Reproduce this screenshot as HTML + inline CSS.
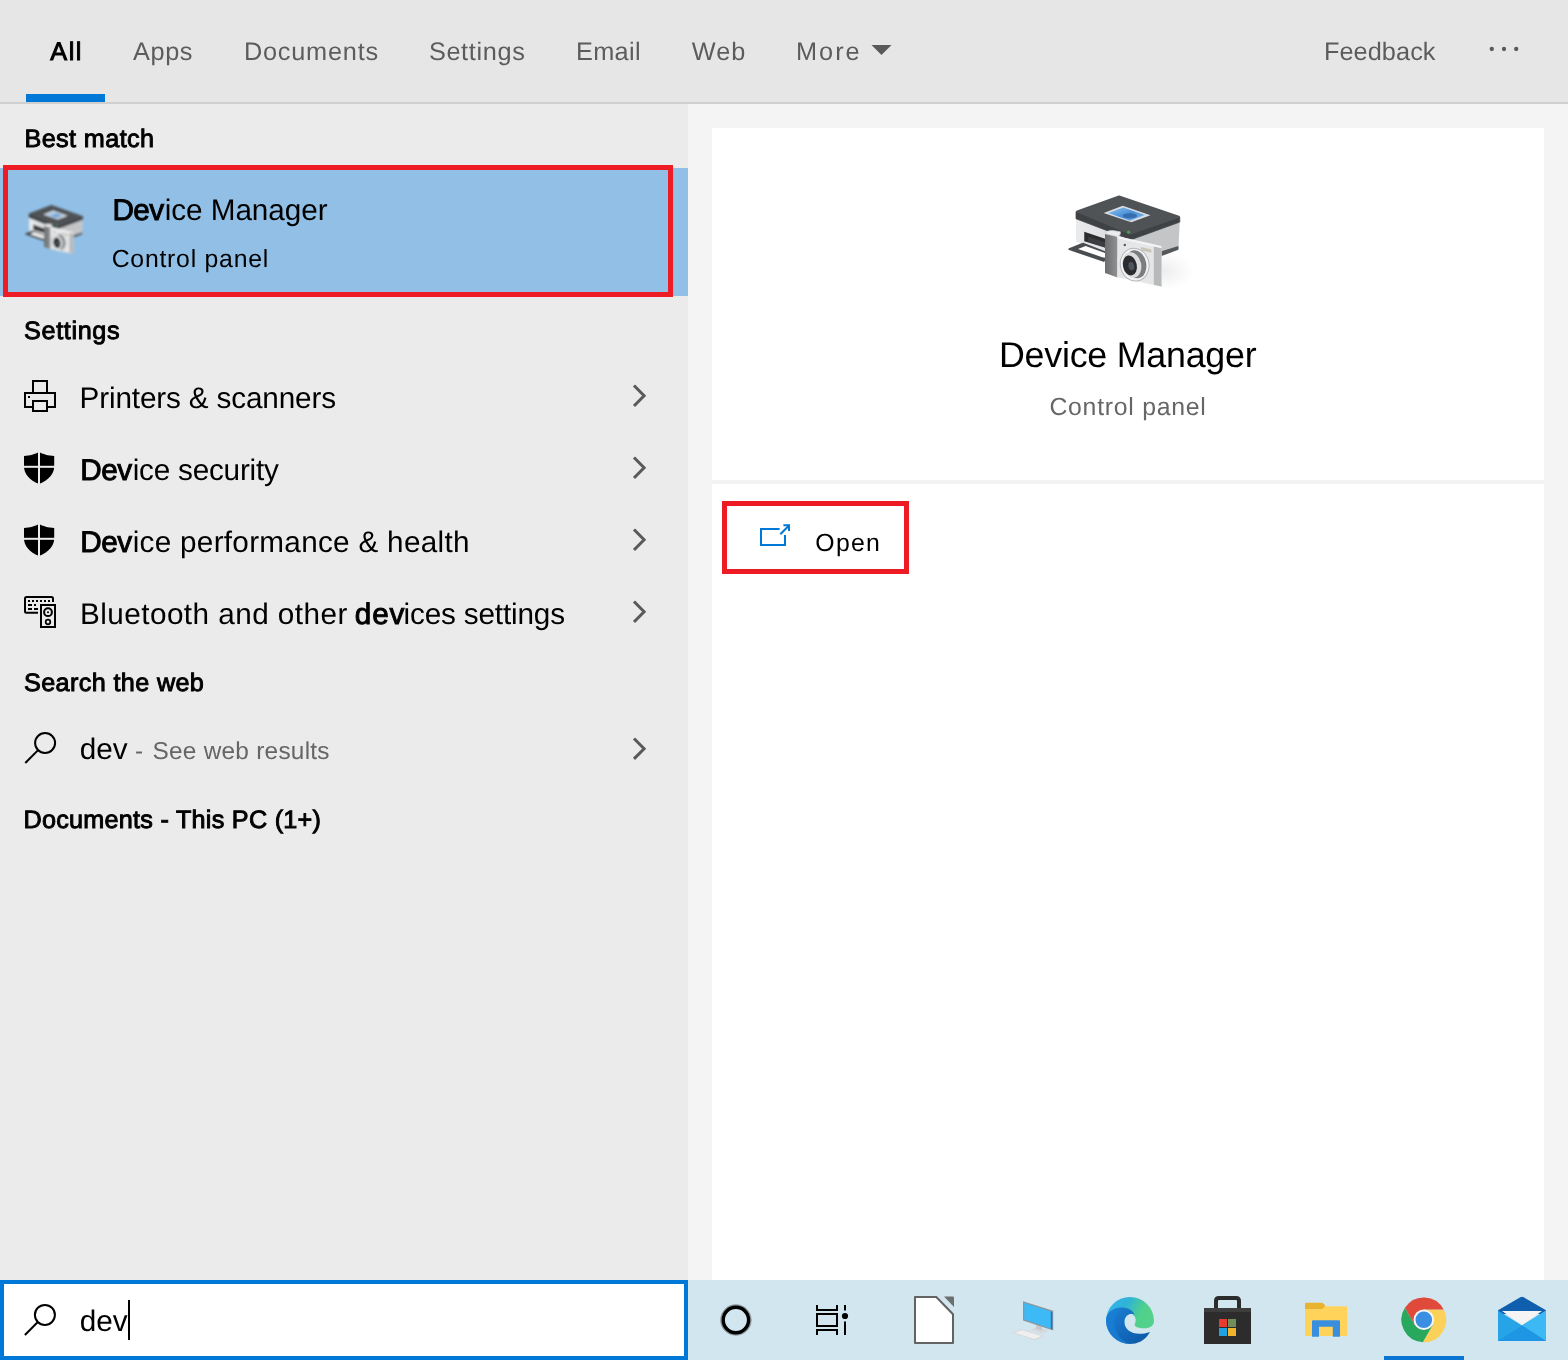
<!DOCTYPE html>
<html lang="en">
<head>
<meta charset="utf-8">
<title>Search - Device Manager</title>
<style>
html,body{margin:0;padding:0;}
body{width:1568px;height:1360px;position:relative;overflow:hidden;background:#ebebeb;font-family:"Liberation Sans",sans-serif;}
.abs{position:absolute;}
.t{position:absolute;white-space:nowrap;line-height:1;margin:0;padding:0;}
.t b{font-weight:400;-webkit-text-stroke:0.95px currentColor;}
.t span,.t b{display:inline;}
#hdr{left:0;top:0;width:1568px;height:102px;background:#e6e6e6;}
#hdrline{left:0;top:102px;width:1568px;height:2px;background:#cfcfcf;}
#tabsel{left:26px;top:94px;width:79px;height:8px;background:#0078d7;}
#leftcol{left:0;top:104px;width:688px;height:1176px;background:#ebebeb;}
#rightcol{left:688px;top:104px;width:880px;height:1176px;background:#f4f4f4;}
#card{left:712px;top:128px;width:832px;height:1152px;background:#fff;}
#cardsep{left:712px;top:480px;width:832px;height:4px;background:#f3f3f3;}
#selrow{left:0;top:168px;width:688px;height:128px;background:#91bfe6;}
#red1{left:3px;top:165px;width:660px;height:122px;border:5px solid #ed1c24;}
#red2{left:722px;top:501px;width:177px;height:63px;border:5px solid #ed1c24;}
#sbox{left:0;top:1280px;width:680px;height:72px;border:4px solid #0078d7;background:#fff;}
#caret{left:128px;top:1300px;width:2px;height:40px;background:#000;}
#tbar{left:688px;top:1280px;width:880px;height:80px;background:#d2e6f0;}
#active{left:1384px;top:1356px;width:80px;height:4px;background:#0a74d2;}
svg{position:absolute;overflow:visible;}
#txt{position:absolute;left:0;top:0;width:1568px;height:1360px;will-change:transform;text-rendering:geometricPrecision;}
</style>
</head>
<body>
<div class="abs" id="hdr"></div>
<div class="abs" id="leftcol"></div>
<div class="abs" id="rightcol"></div>
<div class="abs" id="hdrline"></div>
<div class="abs" id="tabsel"></div>
<div class="abs" id="card"></div>
<div class="abs" id="cardsep"></div>
<div class="abs" id="selrow"></div>
<div class="abs" id="red1"></div>
<div class="abs" id="red2"></div>
<div class="abs" id="sbox"></div>
<div class="abs" id="caret"></div>
<div class="abs" id="tbar"></div>
<div class="abs" id="active"></div>
<svg width="1568" height="1360" viewBox="0 0 1568 1360" style="left:0;top:0">
<polygon points="871.5,45 891.5,45 881.5,55" fill="#595959"/>
<circle cx="1491.8" cy="49" r="2.15" fill="#595959"/>
<circle cx="1504" cy="49" r="2.15" fill="#595959"/>
<circle cx="1516.2" cy="49" r="2.15" fill="#595959"/>
<polyline points="634,385.55 644.1,395.75 634,405.95" fill="none" stroke="#595959" stroke-width="3"/>
<polyline points="634,457.55 644.1,467.75 634,477.95" fill="none" stroke="#595959" stroke-width="3"/>
<polyline points="634,529.55 644.1,539.75 634,549.95" fill="none" stroke="#595959" stroke-width="3"/>
<polyline points="634,601.55 644.1,611.75 634,621.95" fill="none" stroke="#595959" stroke-width="3"/>
<polyline points="634,738.50 644.1,748.70 634,758.90" fill="none" stroke="#595959" stroke-width="3"/>
<g fill="none" stroke="#000" stroke-width="2"><path d="M33,393V381H47V393"/><rect x="25" y="393" width="30" height="14"/><rect x="33" y="401" width="14" height="10" fill="#ebebeb"/></g><rect x="28" y="396" width="2" height="2" fill="#000"/>
<path d="M39,451.8C35.5,454.3 29.5,455.8 24,456V466.5C24,474 29.5,480 39,484C48.5,480 54.2,474 54.2,466.5V456C48.7,455.8 42.5,454.3 39,451.8Z" fill="#000"/><rect x="38" y="450" width="2" height="36" fill="#ebebeb"/><rect x="22" y="465.8" width="34" height="2" fill="#ebebeb"/>
<path d="M39,523.8C35.5,526.3 29.5,527.8 24,528V538.5C24,546 29.5,552 39,556C48.5,552 54.2,546 54.2,538.5V528C48.7,527.8 42.5,526.3 39,523.8Z" fill="#000"/><rect x="38" y="522" width="2" height="36" fill="#ebebeb"/><rect x="22" y="537.8" width="34" height="2" fill="#ebebeb"/>
<g fill="none" stroke="#000" stroke-width="2"><path d="M53,602V598.5Q53,597 51.5,597H26.5Q25,597 25,598.5V611.3Q25,612.8 26.5,612.8H38"/><rect x="41" y="605" width="14" height="22"/><circle cx="48" cy="612.2" r="3.9"/><circle cx="48" cy="622" r="2.3" stroke-width="1.7"/></g><g fill="#000"><rect x="28" y="600" width="2" height="2"/><rect x="32" y="600" width="2" height="2"/><rect x="36" y="600" width="2" height="2"/><rect x="40" y="600" width="2" height="2"/><rect x="44" y="600" width="2" height="2"/><rect x="48" y="600" width="2" height="2"/><rect x="28" y="604" width="4" height="2"/><rect x="34" y="604" width="2" height="2"/><rect x="28" y="608" width="4" height="2"/><rect x="34" y="608" width="4" height="2"/><circle cx="48" cy="612.2" r="1"/></g>
<g fill="none" stroke="#000" stroke-width="2"><circle cx="45.1" cy="743" r="10"/><path d="M38.06,750.11L25.3,763"/></g>
<g fill="none" stroke="#000" stroke-width="2"><circle cx="44.9" cy="1314.9" r="10"/><path d="M37.85,1321.99L24.9,1335"/></g>
<g fill="none" stroke="#0078d7" stroke-width="2"><path d="M779.6,529H761V545H785V535"/><path d="M780.3,534.2L788.8,525.7"/><path d="M783.4,525.3H789V531"/></g>
<circle cx="735.9" cy="1320" r="14.9" fill="none" stroke="#7d8488" stroke-width="1.6" opacity=".8"/><circle cx="735.9" cy="1320" r="12.7" fill="none" stroke="#000" stroke-width="3.4"/>
<g fill="none" stroke="#000" stroke-width="2"><rect x="817" y="1314" width="20" height="12"/><path d="M817,1305V1310H837V1305"/><path d="M817,1335V1330H837V1335"/><path d="M845,1305V1310.4M845,1321.5V1335"/></g><circle cx="845" cy="1316" r="3.1" fill="#000"/>
<path d="M915,1297H936.3L953,1314.3V1343H915Z" fill="#fff" stroke="#636363" stroke-width="2" stroke-linejoin="round"/><path d="M944,1296.6H953Q954,1296.6 954,1297.6V1307Z" fill="#6c6e70"/>
<polygon points="1011.5,1332.8 1022,1329 1045,1336 1035,1340.6" fill="#d6dadd"/><polygon points="1014.5,1332.9 1022,1330.2 1041.5,1336 1034.5,1339" fill="#efefef"/><polygon points="1030.5,1329.5 1038,1326.5 1049,1331 1041,1333.5" fill="#d5d9dc"/><polygon points="1036,1324 1042,1326 1042,1330.5 1036,1329" fill="#c5c9cc"/><polygon points="1023,1301.2 1053.2,1310.8 1053.2,1330.5 1023,1320.6" fill="#8e9499"/><polygon points="1024.2,1302.8 1052,1311.8 1052,1329 1024.2,1319.6" fill="#3db9f5"/><polygon points="1050.8,1311.4 1052.3,1311.9 1052.3,1329.2 1050.8,1328.7" fill="#1576d1"/>
<defs><linearGradient id="eg1" x1="0" y1="0" x2="1" y2="0.35"><stop offset="0" stop-color="#35b4f2"/><stop offset=".45" stop-color="#2fb3d8"/><stop offset=".8" stop-color="#4fd08c"/><stop offset="1" stop-color="#52d28a"/></linearGradient><linearGradient id="eg2" x1="0" y1="0" x2="1" y2="1"><stop offset="0" stop-color="#1b82d8"/><stop offset="1" stop-color="#0c55a3"/></linearGradient></defs>
<path d="M1106,1321A24,24 0 0 1 1154,1321C1154,1325 1151,1328.3 1144,1328.3C1138,1328.3 1134.5,1326.5 1134.5,1324.5C1137,1321 1136,1314 1129,1313C1121,1312 1114,1317 1106,1321Z" fill="url(#eg1)"/>
<path d="M1106,1321C1106,1312 1114,1307.5 1122,1307.5C1128,1307.5 1133,1310.5 1134.5,1314.5C1131,1312.5 1124.5,1315 1124.5,1322C1124.5,1331 1135,1337 1150,1332C1145,1341 1137,1344 1130,1344A24,24 0 0 1 1106,1321Z" fill="url(#eg2)"/>
<path d="M1106,1321C1106,1312 1114,1307.5 1122,1307.5C1117,1311 1114.5,1317 1114.5,1323C1114.5,1333 1121,1341 1130,1344A24,24 0 0 1 1106,1321Z" fill="#1a7fd6" opacity=".75"/>
<path d="M1216,1310V1301Q1216,1298 1219,1298H1236Q1239,1298 1239,1301V1310" fill="none" stroke="#2b2b2b" stroke-width="4"/><rect x="1204" y="1308" width="47" height="36" fill="#2c2c2c"/><rect x="1204" y="1308" width="47" height="4" fill="#3d3d3d"/><rect x="1219" y="1319" width="8" height="8" fill="#e63b2e"/><rect x="1228" y="1319" width="8" height="8" fill="#6f8f5c"/><rect x="1219" y="1328" width="8" height="8" fill="#1ea2e4"/><rect x="1228" y="1328" width="8" height="8" fill="#efb42c"/>
<path d="M1305,1303.7Q1305,1302.7 1306,1302.7H1322.5L1325,1305V1309.5H1305Z" fill="#e9b330"/><path d="M1305,1309.3L1322,1309.3L1325,1306.2H1346.2Q1347.2,1306.2 1347.2,1307.2V1335Q1347.2,1336 1346.2,1336H1306Q1305,1336 1305,1335Z" fill="#ffd25a"/><path d="M1312,1321.2Q1312,1320.2 1313,1320.2H1339Q1340,1320.2 1340,1321.2V1336.8H1332.8V1326.8H1319V1336.8H1312Z" fill="#3a8ede"/>
<path d="M1423.80,1309.50L1443.69,1309.50A22.4,22.4 0 0 1 1422.77,1342.18L1432.72,1324.95Z" fill="#fcd159"/>
<path d="M1432.72,1324.95L1422.77,1342.18A22.4,22.4 0 0 1 1404.93,1307.72L1414.88,1324.95Z" fill="#27a85c"/>
<path d="M1414.88,1324.95L1404.93,1307.72A22.4,22.4 0 0 1 1443.69,1309.50L1423.80,1309.50Z" fill="#df4a3a"/>
<circle cx="1423.8" cy="1319.8" r="10.3" fill="#f4f6f8"/><circle cx="1423.8" cy="1319.8" r="8.3" fill="#3a8fe2"/>
<path d="M1498,1310.3L1520.3,1297.2Q1522,1296.2 1523.7,1297.2L1546,1310.3V1314H1498Z" fill="#0f5fae"/><polygon points="1502,1311 1542,1311 1522,1325" fill="#f4f4f4"/><polygon points="1498,1310.5 1522,1325.5 1546,1310.5 1546,1341 1498,1341" fill="#27a4e8"/><polygon points="1546,1310.5 1546,1341 1522,1325.5" fill="#3cb8f4"/><polygon points="1498,1341 1522,1325.5 1546,1341" fill="#1f96e4"/>
</svg>
<svg width="1568" height="1360" viewBox="0 0 1568 1360" style="left:0;top:0">
<g transform="translate(1050,180) scale(0.09569)"><defs><linearGradient id="bcs" x1="0" y1="0" x2="1" y2="0"><stop offset="0" stop-color="#6a6c6e"/><stop offset="1" stop-color="#909294"/></linearGradient><linearGradient id="blf" x1="0" y1="0" x2="1" y2="0"><stop offset="0" stop-color="#e9ebed"/><stop offset="1" stop-color="#d4d6d8"/></linearGradient><linearGradient id="bsc" x1="0" y1="0" x2="1" y2="1"><stop offset="0" stop-color="#8cc4f0"/><stop offset=".5" stop-color="#4a90d8"/><stop offset="1" stop-color="#7fb6e8"/></linearGradient><radialGradient id="bsh" cx=".5" cy=".5" r=".5"><stop offset="0" stop-color="#000" stop-opacity=".07"/><stop offset="1" stop-color="#000" stop-opacity="0"/></radialGradient></defs><ellipse cx="1180" cy="950" rx="330" ry="200" fill="url(#bsh)"/><polygon points="845,600 1356,425 1342,722 1165,792 845,900" fill="#c3c5c7"/><polygon points="1165,745 1342,690 1342,728 1165,795" fill="#55585b"/><polygon points="272,395 845,600 845,860 272,645" fill="url(#blf)"/><path d="M272,330L845,560L1356,385V440L845,625L272,405Z" fill="#3f4245" stroke="#3f4245" stroke-width="8" stroke-linejoin="round"/><path d="M285,328L722,172L1345,385L838,560Z" fill="#505356" stroke="#505356" stroke-width="22" stroke-linejoin="round"/><polygon points="560,345 760,268 1050,368 850,442" fill="#d7dde3"/><polygon points="610,345 765,287 990,365 835,425" fill="url(#bsc)"/><ellipse cx="835" cy="375" rx="75" ry="28" fill="#2d5f9e" opacity="0.75"/><polygon points="358,540 575,615 575,705 358,640" fill="#2a2c2e"/><polygon points="400,590 575,650 575,705 400,648" fill="#3b3d40"/><path d="M202,722L345,666L600,765L562,846Z" fill="#4a4d50" stroke="#4a4d50" stroke-width="20" stroke-linejoin="round"/><polygon points="292,720 372,690 575,762 575,812 545,806" fill="#fdfdfd"/><path d="M575,565L705,590V1018L575,972Z" fill="url(#bcs)"/><path d="M578,560Q600,520 660,528L735,540Q745,575 705,592Z" fill="#ececec" stroke="#d0d0d0" stroke-width="6"/><polygon points="705,588 1165,690 1165,1112 705,1015" fill="#e5e6e7"/><polygon points="1085,672 1165,690 1165,1112 1085,1095" fill="#b7b9bb"/><polygon points="705,588 1165,690 1165,712 705,610" fill="#f4f4f4"/><ellipse cx="885" cy="885" rx="150" ry="172" transform="rotate(-12 885 885)" fill="#f3f3f3" stroke="#b5b7b9" stroke-width="10"/><ellipse cx="900" cy="880" rx="105" ry="148" transform="rotate(-12 900 880)" fill="#7b7d80"/><ellipse cx="855" cy="888" rx="98" ry="135" transform="rotate(-12 855 888)" fill="#dcdddf"/><ellipse cx="835" cy="893" rx="72" ry="105" transform="rotate(-12 835 893)" fill="#2a2c2f"/><ellipse cx="850" cy="900" rx="30" ry="45" transform="rotate(-12 850 900)" fill="#4b5560"/><circle cx="782" cy="680" r="13" fill="#5a5c5e"/><circle cx="822" cy="545" r="16" fill="#3aa845"/><polygon points="950,700 1060,725 1060,760 950,735" fill="#c9c6b8"/></g>
<defs><filter id="sbl" x="-10%" y="-10%" width="120%" height="120%"><feGaussianBlur stdDeviation="17"/></filter></defs>
<g transform="translate(15.58,196.80) scale(0.04957,0.05150)" filter="url(#sbl)"><defs><linearGradient id="scs" x1="0" y1="0" x2="1" y2="0"><stop offset="0" stop-color="#6a6c6e"/><stop offset="1" stop-color="#909294"/></linearGradient><linearGradient id="slf" x1="0" y1="0" x2="1" y2="0"><stop offset="0" stop-color="#e9ebed"/><stop offset="1" stop-color="#d4d6d8"/></linearGradient><linearGradient id="ssc" x1="0" y1="0" x2="1" y2="1"><stop offset="0" stop-color="#d5e4f2"/><stop offset=".5" stop-color="#8db8e2"/><stop offset="1" stop-color="#cfe0f0"/></linearGradient><radialGradient id="ssh" cx=".5" cy=".5" r=".5"><stop offset="0" stop-color="#000" stop-opacity=".07"/><stop offset="1" stop-color="#000" stop-opacity="0"/></radialGradient></defs><polygon points="845,600 1356,425 1342,722 1165,792 845,900" fill="#c3c5c7"/><polygon points="1165,745 1342,690 1342,728 1165,795" fill="#55585b"/><polygon points="272,395 845,600 845,860 272,645" fill="url(#slf)"/><path d="M272,330L845,560L1356,385V440L845,625L272,405Z" fill="#3f4245" stroke="#3f4245" stroke-width="8" stroke-linejoin="round"/><path d="M285,328L722,172L1345,385L838,560Z" fill="#505356" stroke="#505356" stroke-width="22" stroke-linejoin="round"/><polygon points="560,345 760,268 1050,368 850,442" fill="#d7dde3"/><polygon points="610,345 765,287 990,365 835,425" fill="url(#ssc)"/><ellipse cx="835" cy="375" rx="75" ry="28" fill="#2d5f9e" opacity="0.35"/><polygon points="358,540 575,615 575,705 358,640" fill="#2a2c2e"/><polygon points="400,590 575,650 575,705 400,648" fill="#3b3d40"/><path d="M202,722L345,666L600,765L562,846Z" fill="#4a4d50" stroke="#4a4d50" stroke-width="20" stroke-linejoin="round"/><polygon points="292,720 372,690 575,762 575,812 545,806" fill="#fdfdfd"/><path d="M575,565L705,590V1018L575,972Z" fill="url(#scs)"/><path d="M578,560Q600,520 660,528L735,540Q745,575 705,592Z" fill="#ececec" stroke="#d0d0d0" stroke-width="6"/><polygon points="705,588 1165,690 1165,1112 705,1015" fill="#e5e6e7"/><polygon points="1085,672 1165,690 1165,1112 1085,1095" fill="#b7b9bb"/><polygon points="705,588 1165,690 1165,712 705,610" fill="#f4f4f4"/><ellipse cx="885" cy="885" rx="150" ry="172" transform="rotate(-12 885 885)" fill="#f3f3f3" stroke="#b5b7b9" stroke-width="10"/><ellipse cx="900" cy="880" rx="105" ry="148" transform="rotate(-12 900 880)" fill="#7b7d80"/><ellipse cx="855" cy="888" rx="98" ry="135" transform="rotate(-12 855 888)" fill="#dcdddf"/><ellipse cx="835" cy="893" rx="72" ry="105" transform="rotate(-12 835 893)" fill="#2a2c2f"/><ellipse cx="850" cy="900" rx="30" ry="45" transform="rotate(-12 850 900)" fill="#4b5560"/><circle cx="782" cy="680" r="13" fill="#5a5c5e"/><circle cx="822" cy="545" r="16" fill="#3aa845"/><polygon points="950,700 1060,725 1060,760 950,735" fill="#c9c6b8"/></g>
</svg>

<div id="txt">
<div class="t" id="t_all" style="left:50.19px;top:39.86px;font-size:25.3px;color:#000"><b class="sg" id="t_all_0" style="letter-spacing:1.592px">All</b></div>
<div class="t" id="t_apps" style="left:133.06px;top:39.86px;font-size:25.3px;color:#5c5c5c"><span class="sg" id="t_apps_0" style="letter-spacing:0.578px">Apps</span></div>
<div class="t" id="t_docs" style="left:243.94px;top:39.86px;font-size:25.3px;color:#5c5c5c"><span class="sg" id="t_docs_0" style="letter-spacing:0.783px">Documents</span></div>
<div class="t" id="t_set" style="left:428.90px;top:39.86px;font-size:25.3px;color:#5c5c5c"><span class="sg" id="t_set_0" style="letter-spacing:0.640px">Settings</span></div>
<div class="t" id="t_email" style="left:575.94px;top:39.86px;font-size:25.3px;color:#5c5c5c"><span class="sg" id="t_email_0" style="letter-spacing:0.336px">Email</span></div>
<div class="t" id="t_web" style="left:691.66px;top:39.86px;font-size:25.3px;color:#5c5c5c"><span class="sg" id="t_web_0" style="letter-spacing:1.090px">Web</span></div>
<div class="t" id="t_more" style="left:795.94px;top:39.86px;font-size:25.3px;color:#5c5c5c"><span class="sg" id="t_more_0" style="letter-spacing:2.037px">More</span></div>
<div class="t" id="t_fb" style="left:1323.94px;top:39.86px;font-size:25.3px;color:#5c5c5c"><span class="sg" id="t_fb_0" style="letter-spacing:0.068px">Feedback</span></div>
<div class="t" id="h_best" style="left:24.43px;top:126.96px;font-size:25.2px;color:#000"><b class="sg" id="h_best_0" style="letter-spacing:0.404px">Best match</b></div>
<div class="t" id="h_set" style="left:24.11px;top:318.90px;font-size:25.2px;color:#000"><b class="sg" id="h_set_0" style="letter-spacing:0.636px">Settings</b></div>
<div class="t" id="h_web" style="left:24.00px;top:670.71px;font-size:25.2px;color:#000"><b class="sg" id="h_web_0" style="letter-spacing:0.373px">Search the web</b></div>
<div class="t" id="h_docs" style="left:23.43px;top:808.40px;font-size:25.2px;color:#000"><b class="sg" id="h_docs_0" style="letter-spacing:0.267px">Documents - This PC (1+)</b></div>
<div class="t" id="i_dm" style="left:112.39px;top:195.81px;font-size:29.7px;color:#000"><b class="sg" id="i_dm_0" style="letter-spacing:-0.508px">Dev</b><span class="sg" id="i_dm_1" style="letter-spacing:-0.045px;margin-left:1.04px">ice Manager</span></div>
<div class="t" id="i_cp" style="left:111.66px;top:247.91px;font-size:24.8px;color:#000"><span class="sg" id="i_cp_0" style="letter-spacing:0.761px">Control panel</span></div>
<div class="t" id="r1" style="left:79.62px;top:383.91px;font-size:29.7px;color:#000"><span class="sg" id="r1_0" style="letter-spacing:-0.144px">Printers &amp; scanners</span></div>
<div class="t" id="r2" style="left:80.17px;top:455.91px;font-size:29.7px;color:#000"><b class="sg" id="r2_0" style="letter-spacing:-0.435px">Dev</b><span class="sg" id="r2_1" style="letter-spacing:-0.207px;margin-left:1.01px">ice security</span></div>
<div class="t" id="r3" style="left:80.17px;top:527.91px;font-size:29.7px;color:#000"><b class="sg" id="r3_0" style="letter-spacing:-0.435px">Dev</b><span class="sg" id="r3_1" style="letter-spacing:0.293px;margin-left:1.01px">ice performance &amp; health</span></div>
<div class="t" id="r4" style="left:79.97px;top:599.91px;font-size:29.7px;color:#000"><span class="sg" id="r4_0" style="letter-spacing:0.456px">Bluetooth and other </span><b class="sg" id="r4_1" style="letter-spacing:0.790px;margin-left:-1.63px">dev</b><span class="sg" id="r4_2" style="letter-spacing:-0.164px;margin-left:-1.50px">ices settings</span></div>
<div class="t" id="w_web" style="left:79.72px;top:735.31px;font-size:29.7px;color:#000"><span class="sg" id="w_web_0" style="letter-spacing:0.024px">dev</span><span class="sg" id="w_web_1" style="letter-spacing:0.374px;margin-left:0.31px;font-size:24.4px;color:#666666"> -</span><span class="sg" id="w_web_2" style="letter-spacing:0.250px;margin-left:1.89px;font-size:24.4px;color:#666666"> See web results</span></div>
<div class="t" id="s_dev" style="left:79.71px;top:1307.41px;font-size:29.7px;color:#000"><span class="sg" id="s_dev_0" style="letter-spacing:0.071px">dev</span></div>
<div class="t" id="p_dm" style="left:999.00px;top:338.00px;font-size:35.8px;color:#000"><span class="sg" id="p_dm_0" style="letter-spacing:-0.231px">Device Manager</span></div>
<div class="t" id="p_cp" style="left:1049.42px;top:395.70px;font-size:24.8px;color:#666666"><span class="sg" id="p_cp_0" style="letter-spacing:0.748px">Control panel</span></div>
<div class="t" id="p_open" style="left:815.35px;top:532.01px;font-size:24.8px;color:#000"><span class="sg" id="p_open_0" style="letter-spacing:1.298px">Open</span></div>

</div>
</body>
</html>
